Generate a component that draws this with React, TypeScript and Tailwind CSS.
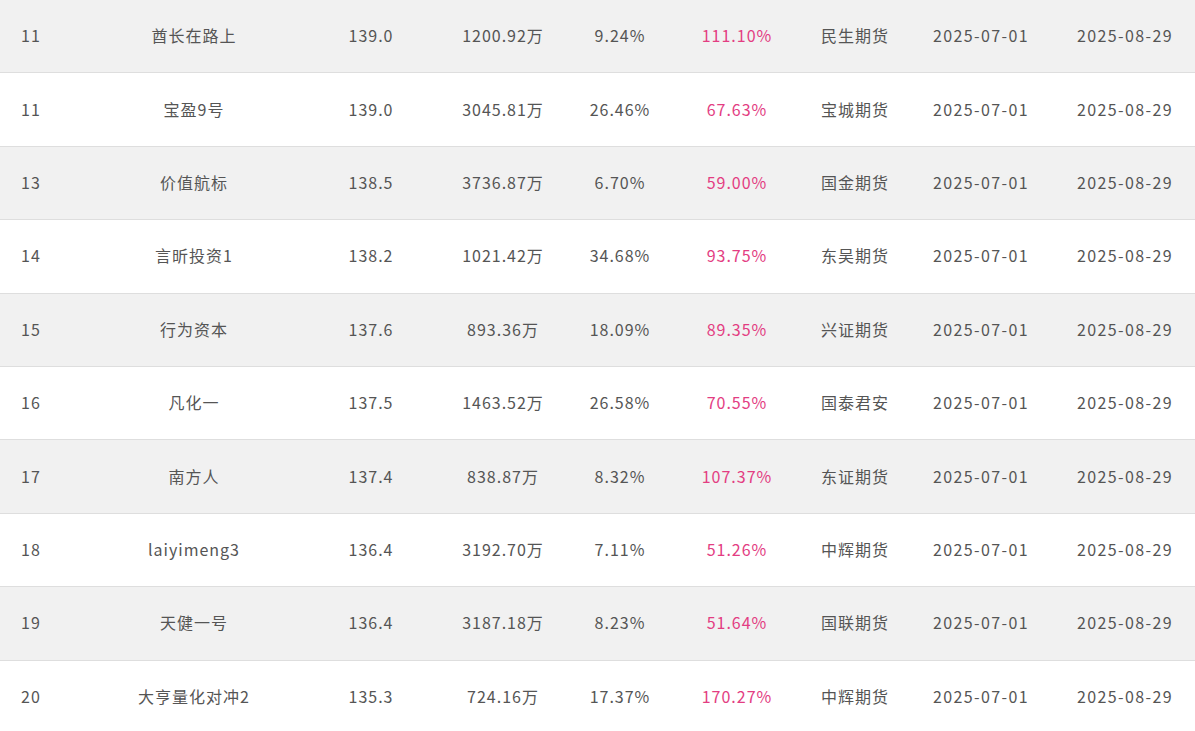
const rows = [
  { rank: "11", name: "酋长在路上", score: "139.0", amount: "1200.92万", dd: "9.24%", ret: "111.10%", broker: "民生期货", start: "2025-07-01", end: "2025-08-29" },
  { rank: "11", name: "宝盈9号", score: "139.0", amount: "3045.81万", dd: "26.46%", ret: "67.63%", broker: "宝城期货", start: "2025-07-01", end: "2025-08-29" },
  { rank: "13", name: "价值航标", score: "138.5", amount: "3736.87万", dd: "6.70%", ret: "59.00%", broker: "国金期货", start: "2025-07-01", end: "2025-08-29" },
  { rank: "14", name: "言昕投资1", score: "138.2", amount: "1021.42万", dd: "34.68%", ret: "93.75%", broker: "东吴期货", start: "2025-07-01", end: "2025-08-29" },
  { rank: "15", name: "行为资本", score: "137.6", amount: "893.36万", dd: "18.09%", ret: "89.35%", broker: "兴证期货", start: "2025-07-01", end: "2025-08-29" },
  { rank: "16", name: "凡化一", score: "137.5", amount: "1463.52万", dd: "26.58%", ret: "70.55%", broker: "国泰君安", start: "2025-07-01", end: "2025-08-29" },
  { rank: "17", name: "南方人", score: "137.4", amount: "838.87万", dd: "8.32%", ret: "107.37%", broker: "东证期货", start: "2025-07-01", end: "2025-08-29" },
  { rank: "18", name: "laiyimeng3", score: "136.4", amount: "3192.70万", dd: "7.11%", ret: "51.26%", broker: "中辉期货", start: "2025-07-01", end: "2025-08-29" },
  { rank: "19", name: "天健一号", score: "136.4", amount: "3187.18万", dd: "8.23%", ret: "51.64%", broker: "国联期货", start: "2025-07-01", end: "2025-08-29" },
  { rank: "20", name: "大亨量化对冲2", score: "135.3", amount: "724.16万", dd: "17.37%", ret: "170.27%", broker: "中辉期货", start: "2025-07-01", end: "2025-08-29" },
];

const cell = "flex items-center justify-center whitespace-nowrap pb-[2px]";

export default function App() {
  return (
    <div className="w-[1195px] h-[731px] overflow-hidden bg-white font-['Noto_Sans_CJK_SC',sans-serif] text-[16px] tracking-[1px] text-[#555]">
      {rows.map((r, i) => (
        <div
          key={i}
          className={`grid grid-cols-[62px_264px_90px_174px_60px_174px_62px_190px_98px_1fr] h-[73.4px] border-b border-[#dedede] ${
            i % 2 === 0 ? "bg-[#f1f1f1]" : "bg-white"
          }`}
        >
          <div className={cell}>{r.rank}</div>
          <div className={cell}>{r.name}</div>
          <div className={cell}>{r.score}</div>
          <div className={cell}>{r.amount}</div>
          <div className={cell}>{r.dd}</div>
          <div className={`${cell} text-[#e33d82]`}>{r.ret}</div>
          <div className={cell}>{r.broker}</div>
          <div className={`${cell} tracking-[1.4px]`}>{r.start}</div>
          <div className={`${cell} tracking-[1.4px]`}>{r.end}</div>
          <div />
        </div>
      ))}
    </div>
  );
}
